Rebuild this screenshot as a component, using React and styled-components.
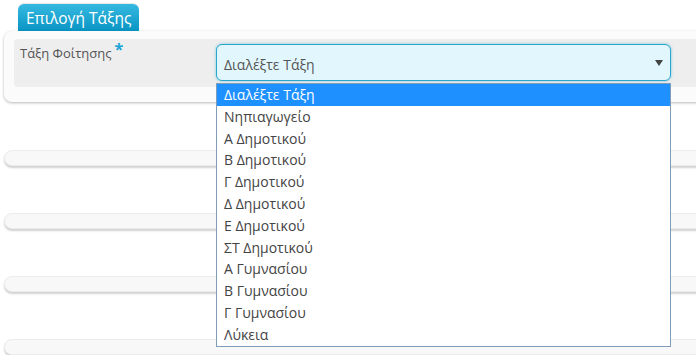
import React from "react";
import styled, { createGlobalStyle } from "styled-components";

const Global = createGlobalStyle`
  html, body {
    margin: 0;
    padding: 0;
    background: #ffffff;
    overflow: hidden;
    font-family: "Open Sans", "Noto Sans", sans-serif;
  }
`;

const Page = styled.div`
  width: 760px;
  padding: 4px 0 0 4px;
  display: flex;
  flex-direction: column;
`;

const Tab = styled.div`
  align-self: flex-start;
  margin-left: 14px;
  height: 27px;
  padding: 0 8px 0 8px;
  display: flex;
  align-items: center;
  color: #ffffff;
  font-size: 15.5px;
  border-radius: 6px 6px 0 0;
  background: linear-gradient(#35b9e0, #0a95c4);
  box-shadow: 0 -1px 1px rgba(0, 0, 0, 0.1);
`;

const Panel = styled.section`
  position: relative;
  height: 71px;
  box-sizing: border-box;
  padding: 8px 0 15px 10px;
  background: #fbfbfb;
  border-radius: 8px;
  box-shadow: 0 1px 3px rgba(0, 0, 0, 0.28);
  display: flex;
`;

const FieldRow = styled.div`
  flex: 1;
  background: #eeeeee;
  border-radius: 4px 0 0 4px;
  display: flex;
  padding: 5px 0 0 6px;
`;

const Label = styled.label`
  width: 196px;
  font-size: 13px;
  color: #555;
  line-height: 16px;
`;

const Star = styled.span`
  color: #1ba3d6;
  font-size: 16px;
  font-weight: bold;
  margin-left: 3px;
  position: relative;
  top: -3px;
`;

const SelectWrap = styled.div`
  position: relative;
  width: 455px;
`;

const SelectBox = styled.div`
  height: 37px;
  box-sizing: border-box;
  border: 1px solid #2aa6cc;
  border-radius: 6px;
  background: #e2f7fd;
  box-shadow: 0 0 3px rgba(42, 166, 204, 0.6);
  display: flex;
  align-items: center;
  justify-content: space-between;
  padding: 4px 7px 0 7px;
  font-size: 14px;
  color: #555;
`;

const Arrow = styled.span`
  width: 0;
  height: 0;
  border-left: 4px solid transparent;
  border-right: 4px solid transparent;
  border-top: 6px solid #444;
  margin-top: -3px;
`;

const List = styled.ul`
  position: absolute;
  top: 39px;
  left: 0;
  width: 455px;
  box-sizing: border-box;
  margin: 0;
  padding: 0;
  list-style: none;
  background: #ffffff;
  border: 1px solid #7f9db9;
  z-index: 5;
`;

const Option = styled.li`
  height: 21.8px;
  line-height: 21.8px;
  padding-left: 7px;
  font-size: 14px;
  color: ${(p) => (p.$active ? "#ffffff" : "#444")};
  background: ${(p) => (p.$active ? "#1e90ff" : "transparent")};
`;

const Collapsed = styled.div`
  height: 14px;
  margin-top: ${(p) => p.$gap}px;
  background: #f8f8f8;
  border: 1px solid #ececec;
  border-radius: 8px;
  box-shadow: 0 2px 2px rgba(0, 0, 0, 0.18);
`;

const options = [
  "Διαλέξτε Τάξη",
  "Νηπιαγωγείο",
  "Α Δημοτικού",
  "Β Δημοτικού",
  "Γ Δημοτικού",
  "Δ Δημοτικού",
  "Ε Δημοτικού",
  "ΣΤ Δημοτικού",
  "Α Γυμνασίου",
  "Β Γυμνασίου",
  "Γ Γυμνασίου",
  "Λύκεια",
];

export default function App() {
  return (
    <>
      <Global />
      <Page>
        <Tab>Επιλογή Τάξης</Tab>
        <Panel>
          <FieldRow>
            <Label>
              Τάξη Φοίτησης<Star>*</Star>
            </Label>
            <SelectWrap>
              <SelectBox>
                <span>Διαλέξτε Τάξη</span>
                <Arrow />
              </SelectBox>
              <List>
                {options.map((o, i) => (
                  <Option key={o} $active={i === 0}>
                    {o}
                  </Option>
                ))}
              </List>
            </SelectWrap>
          </FieldRow>
        </Panel>
        <Collapsed $gap={48} />
        <Collapsed $gap={47} />
        <Collapsed $gap={47} />
        <Collapsed $gap={47} />
      </Page>
    </>
  );
}
